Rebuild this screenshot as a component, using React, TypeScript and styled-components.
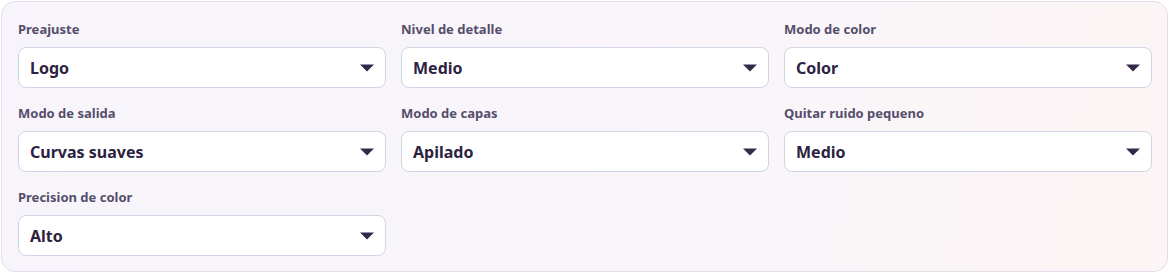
import React from "react";
import styled, { createGlobalStyle } from "styled-components";

const GlobalStyle = createGlobalStyle`
  html, body {
    margin: 0;
    padding: 0;
    background: #ffffff;
  }
  body {
    font-family: "Noto Sans", "Open Sans", sans-serif;
  }
`;

type FieldType = {
  label: string;
  value: string;
};

const fields: FieldType[] = [
  { label: "Preajuste", value: "Logo" },
  { label: "Nivel de detalle", value: "Medio" },
  { label: "Modo de color", value: "Color" },
  { label: "Modo de salida", value: "Curvas suaves" },
  { label: "Modo de capas", value: "Apilado" },
  { label: "Quitar ruido pequeno", value: "Medio" },
  { label: "Precision de color", value: "Alto" },
];

const Arrow = () => (
  <svg width="14" height="8" viewBox="0 0 14 8">
    <path d="M0 0.5 H14 L7 7.5 Z" fill="#35294a" />
  </svg>
);

const Field = (props: FieldType) => {
  return (
    <FieldBox>
      <Label>{props.label}</Label>
      <Select>
        <Value>{props.value}</Value>
        <Arrow />
      </Select>
    </FieldBox>
  );
};

export default function App() {
  return (
    <>
      <GlobalStyle />
      <Page>
        <Card>
          {fields.map((f) => (
            <Field key={f.label} label={f.label} value={f.value} />
          ))}
        </Card>
      </Page>
    </>
  );
}

const Page = styled.div`
  padding: 1px 2px 1px 1px;
`;

const Card = styled.div`
  display: grid;
  grid-template-columns: repeat(3, 1fr);
  column-gap: 15px;
  row-gap: 16px;
  padding: 18px 15px 15px 16px;
  border: 1px solid #e2dde9;
  border-radius: 14px;
  background: linear-gradient(100deg, #f7f5fb 0%, #f9f5fa 55%, #fcf5f5 100%);
`;

const FieldBox = styled.div`
  display: flex;
  flex-direction: column;
`;

const Label = styled.div`
  font-size: 13px;
  line-height: 18px;
  font-weight: 700;
  color: #554e6b;
  margin-bottom: 9px;
`;

const Select = styled.div`
  display: flex;
  align-items: center;
  justify-content: space-between;
  height: 41px;
  box-sizing: border-box;
  padding: 1px 11px 0 11px;
  background: #ffffff;
  border: 1px solid #cfd5e4;
  border-radius: 8px;
`;

const Value = styled.span`
  font-size: 16px;
  font-weight: 700;
  color: #2d2340;
`;
